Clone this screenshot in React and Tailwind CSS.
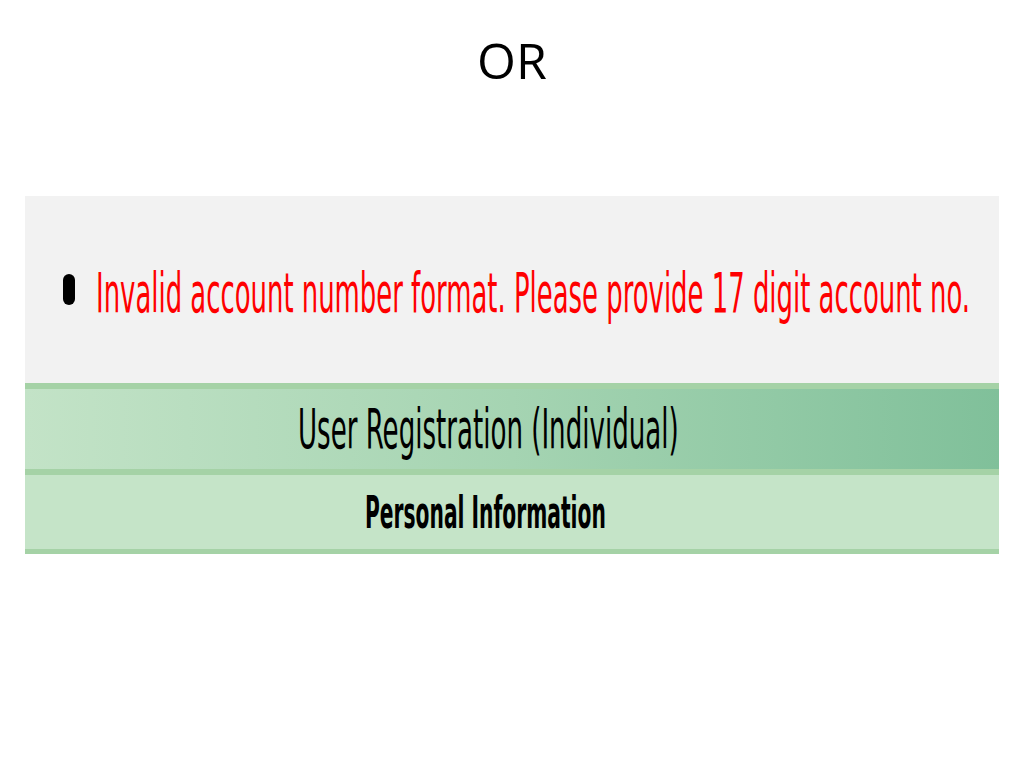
import React from "react";

export default function App() {
  return (
    <div className="w-[1024px] h-[768px] bg-white flex flex-col items-center overflow-hidden">
      {/* Slide title */}
      <h1 className="mt-[27px] h-[66px] text-[50px] leading-[66px] text-black font-['Open_Sans',sans-serif]">
        OR
      </h1>

      {/* Screenshot of the error + form header */}
      <div className="mt-[103px] w-[974px] self-start ml-[25px] flex flex-col">
        <div className="h-[187px] bg-[#f2f2f2] flex items-center pl-[38px] pt-[6px]">
          <span className="w-[12px] h-[31px] rounded-full bg-black mb-[6px]"></span>
          <span className="ml-[21px] text-[28.8px] leading-[28px] text-[#ff0000] whitespace-nowrap font-['DejaVu_Sans_Condensed','DejaVu_Sans',sans-serif] scale-y-[1.9] origin-center">
            Invalid account number format. Please provide 17 digit account no.
          </span>
        </div>

        <div className="h-[6px] bg-[#a5d2a6]"></div>
        <div className="h-[80px] bg-gradient-to-r from-[#c3e3c7] via-[#a5d4b2] to-[#80c09a] flex items-center pl-[273px]">
          <span className="text-[29px] leading-[28px] text-black whitespace-nowrap font-['DejaVu_Sans_Condensed','DejaVu_Sans',sans-serif] scale-y-[1.9]">
            User Registration (Individual)
          </span>
        </div>
        <div className="h-[6px] bg-[#a5d2a6]"></div>
        <div className="h-[74px] bg-[#c5e4c8] flex items-center pl-[340px]">
          <span className="text-[22.5px] leading-[22px] font-bold text-black whitespace-nowrap font-['DejaVu_Sans_Condensed','DejaVu_Sans',sans-serif] scale-y-[1.95]">
            Personal Information
          </span>
        </div>
        <div className="h-[5px] bg-[#a5d2a6]"></div>
      </div>
    </div>
  );
}
